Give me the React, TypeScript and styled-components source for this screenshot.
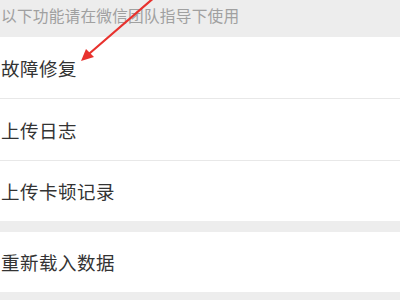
import React from "react";
import styled, { createGlobalStyle } from "styled-components";

const Global = createGlobalStyle`
  html, body { margin: 0; padding: 0; background: #ededed; }
  body { font-family: "Noto Sans CJK SC", "Noto Sans", sans-serif; }
`;

const Page = styled.div`
  position: relative;
  width: 400px;
  height: 300px;
  overflow: hidden;
  background: #ededed;
`;

const Hint = styled.div`
  height: 37px;
  display: flex;
  align-items: center;
  padding-left: 1px;
  padding-bottom: 6px;
  box-sizing: border-box;
  font-size: 15.7px;
  color: #a0a0a0;
  letter-spacing: 0.2px;
  white-space: nowrap;
`;

const Group = styled.div<{ $gap?: number }>`
  background: #fff;
  margin-top: ${(p) => p.$gap ?? 0}px;
`;

const Row = styled.div<{ $h: number }>`
  height: ${(p) => p.$h}px;
  display: flex;
  align-items: center;
  padding-left: 1px;
  font-size: 18.5px;
  color: #333;
  letter-spacing: 0.5px;
  border-bottom: 1px solid #e8e8e8;
  box-sizing: border-box;
  &:last-child { border-bottom: none; }
`;

const Arrow = styled.svg`
  position: absolute;
  left: 0;
  top: 0;
  pointer-events: none;
`;

export default function App() {
  return (
    <Page>
      <Global />
      <Hint>以下功能请在微信团队指导下使用</Hint>
      <Group>
        <Row $h={62}>故障修复</Row>
        <Row $h={62}>上传日志</Row>
        <Row $h={60}>上传卡顿记录</Row>
      </Group>
      <Group $gap={11}>
        <Row $h={60}>重新载入数据</Row>
      </Group>
      <Arrow width="400" height="300" viewBox="0 0 400 300">
        <line x1="156" y1="-4" x2="90" y2="53" stroke="#e8322e" strokeWidth="2.2" strokeLinecap="round" />
        <polygon points="81,61 86,49 94,57" fill="#e8322e" />
      </Arrow>
    </Page>
  );
}
